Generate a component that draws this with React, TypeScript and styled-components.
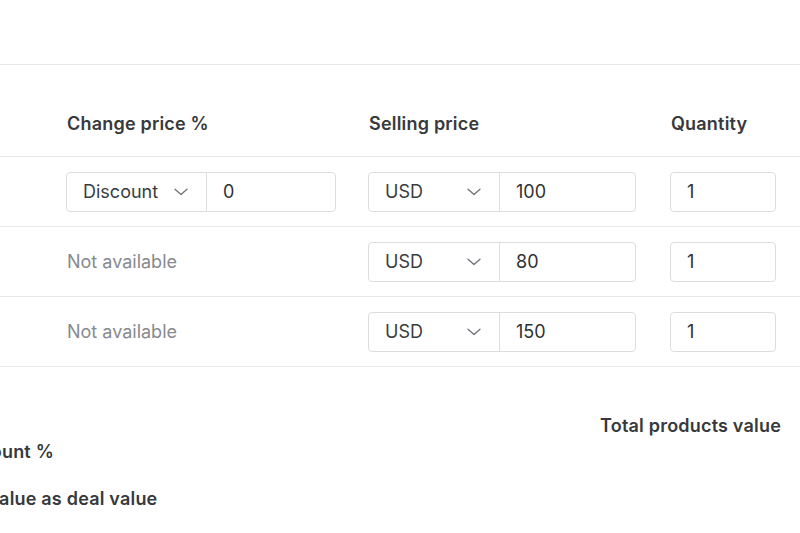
import React from 'react';
import styled, { createGlobalStyle } from 'styled-components';

const GlobalStyle = createGlobalStyle`
    html, body {
        margin: 0;
        padding: 0;
        background: #ffffff;
        overflow: hidden;
    }
    body {
        font-family: Inter, "Noto Sans", "Liberation Sans", sans-serif;
        color: #37393c;
    }
`;

const Page = styled.div({
    width: 800,
    height: 533,
    overflow: 'hidden',
    paddingTop: 64,
    boxSizing: 'border-box'
});

const Row = styled.div<{ $header?: boolean }>(p => ({
    display: 'grid',
    gridTemplateColumns: '302px 302px 106px',
    alignItems: p.$header ? 'end' : 'center',
    paddingLeft: 66,
    borderTop: '1px solid #e8e8ea',
    height: p.$header ? 92 : 70,
    paddingBottom: p.$header ? 22 : 0,
    boxSizing: 'border-box'
}));

const TableEnd = styled.div({
    borderTop: '1px solid #e8e8ea'
});

const HeaderCell = styled.div({
    fontSize: 18,
    fontWeight: 600,
    lineHeight: '20px',
    color: '#37393c',
    letterSpacing: 0.2,
    paddingLeft: 1
});

const Muted = styled.div({
    fontSize: 18,
    lineHeight: '20px',
    color: '#878a8f',
    paddingLeft: 1
});

const InputGroup = styled.div<{ $width: number }>(p => ({
    display: 'flex',
    width: p.$width,
    height: 40,
    border: '1px solid #dddde0',
    borderRadius: 4,
    boxSizing: 'border-box',
    background: '#fff'
}));

const SelectBox = styled.div<{ $width: number }>(p => ({
    width: p.$width,
    flexShrink: 0,
    display: 'flex',
    alignItems: 'center',
    justifyContent: 'space-between',
    padding: '0 18px 0 16px',
    boxSizing: 'border-box',
    borderRight: '1px solid #dddde0',
    fontSize: 18,
    color: '#3a3c3f'
}));

const ValueField = styled.div({
    flex: 1,
    display: 'flex',
    alignItems: 'center',
    paddingLeft: 16,
    fontSize: 18,
    color: '#2f3134'
});

const Footer = styled.div({
    display: 'flex',
    justifyContent: 'space-between',
    paddingRight: 19
});

const FooterLeft = styled.div({
    display: 'flex',
    flexDirection: 'column',
    gap: 27,
    paddingTop: 75,
    marginLeft: -95
});

const FooterLabel = styled.div({
    fontSize: 18,
    fontWeight: 600,
    lineHeight: '20px',
    color: '#37393c',
    letterSpacing: 0.2,
    whiteSpace: 'nowrap'
});

const FooterRight = styled.div({
    paddingTop: 49
});

const Chevron = () => (
    <svg width="14" height="8" viewBox="0 0 14 8" fill="none">
        <path d="M1 1.2 L7 6.5 L13 1.2" stroke="#707377" strokeWidth="1.3" strokeLinecap="round" strokeLinejoin="round" />
    </svg>
);

const rows = [
    { change: true, price: '100', qty: '1' },
    { change: false, price: '80', qty: '1' },
    { change: false, price: '150', qty: '1' }
];

export default function App() {
    return (
        <Page>
            <GlobalStyle />
            <Row $header>
                <HeaderCell>Change price %</HeaderCell>
                <HeaderCell>Selling price</HeaderCell>
                <HeaderCell>Quantity</HeaderCell>
            </Row>

            {rows.map((r, i) => (
                <Row key={i}>
                    {r.change ? (
                        <InputGroup $width={270}>
                            <SelectBox $width={140}>
                                Discount <Chevron />
                            </SelectBox>
                            <ValueField>0</ValueField>
                        </InputGroup>
                    ) : (
                        <Muted>Not available</Muted>
                    )}
                    <InputGroup $width={268}>
                        <SelectBox $width={131}>
                            USD <Chevron />
                        </SelectBox>
                        <ValueField>{r.price}</ValueField>
                    </InputGroup>
                    <InputGroup $width={106}>
                        <ValueField>{r.qty}</ValueField>
                    </InputGroup>
                </Row>
            ))}
            <TableEnd />

            <Footer>
                <FooterLeft>
                    <FooterLabel>Total discount %</FooterLabel>
                    <FooterLabel>Use total value as deal value</FooterLabel>
                </FooterLeft>
                <FooterRight>
                    <FooterLabel>Total products value</FooterLabel>
                </FooterRight>
            </Footer>
        </Page>
    );
}
